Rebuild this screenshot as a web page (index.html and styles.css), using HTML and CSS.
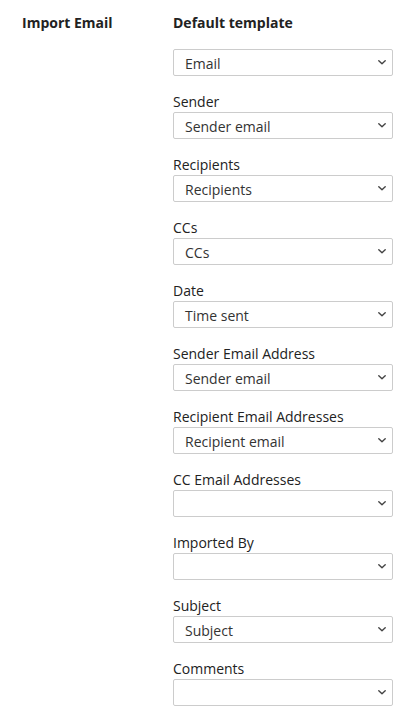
FILE: index.html
```html
<!DOCTYPE html>
<html>
<head>
<meta charset="utf-8">
<link rel="stylesheet" href="styles.css">
</head>
<body>
<div class="page">
  <div class="section-title">Import Email</div>
  <div class="form">
    <div class="form-title">Default template</div>
    <div class="field">
      <div class="select"><span class="value">Email</span><svg class="chev" viewBox="0 0 8 5"><path d="M0.8 0.8 L4 3.8 L7.2 0.8"/></svg></div>
    </div>
    <div class="field">
      <div class="label">Sender</div>
      <div class="select"><span class="value">Sender email</span><svg class="chev" viewBox="0 0 8 5"><path d="M0.8 0.8 L4 3.8 L7.2 0.8"/></svg></div>
    </div>
    <div class="field">
      <div class="label">Recipients</div>
      <div class="select"><span class="value">Recipients</span><svg class="chev" viewBox="0 0 8 5"><path d="M0.8 0.8 L4 3.8 L7.2 0.8"/></svg></div>
    </div>
    <div class="field">
      <div class="label">CCs</div>
      <div class="select"><span class="value">CCs</span><svg class="chev" viewBox="0 0 8 5"><path d="M0.8 0.8 L4 3.8 L7.2 0.8"/></svg></div>
    </div>
    <div class="field">
      <div class="label">Date</div>
      <div class="select"><span class="value">Time sent</span><svg class="chev" viewBox="0 0 8 5"><path d="M0.8 0.8 L4 3.8 L7.2 0.8"/></svg></div>
    </div>
    <div class="field">
      <div class="label">Sender Email Address</div>
      <div class="select"><span class="value">Sender email</span><svg class="chev" viewBox="0 0 8 5"><path d="M0.8 0.8 L4 3.8 L7.2 0.8"/></svg></div>
    </div>
    <div class="field">
      <div class="label">Recipient Email Addresses</div>
      <div class="select"><span class="value">Recipient email</span><svg class="chev" viewBox="0 0 8 5"><path d="M0.8 0.8 L4 3.8 L7.2 0.8"/></svg></div>
    </div>
    <div class="field">
      <div class="label">CC Email Addresses</div>
      <div class="select"><span class="value"></span><svg class="chev" viewBox="0 0 8 5"><path d="M0.8 0.8 L4 3.8 L7.2 0.8"/></svg></div>
    </div>
    <div class="field">
      <div class="label">Imported By</div>
      <div class="select"><span class="value"></span><svg class="chev" viewBox="0 0 8 5"><path d="M0.8 0.8 L4 3.8 L7.2 0.8"/></svg></div>
    </div>
    <div class="field">
      <div class="label">Subject</div>
      <div class="select"><span class="value">Subject</span><svg class="chev" viewBox="0 0 8 5"><path d="M0.8 0.8 L4 3.8 L7.2 0.8"/></svg></div>
    </div>
    <div class="field">
      <div class="label">Comments</div>
      <div class="select"><span class="value"></span><svg class="chev" viewBox="0 0 8 5"><path d="M0.8 0.8 L4 3.8 L7.2 0.8"/></svg></div>
    </div>
  </div>
</div>
</body>
</html>
```

FILE: styles.css
```css
html, body {
  margin: 0;
  padding: 0;
  background: #ffffff;
}
body {
  font-family: "Open Sans", "Liberation Sans", sans-serif;
  font-size: 14px;
  line-height: 20px;
  color: #222222;
}
.page {
  display: grid;
  grid-template-columns: 151px 220px;
  padding: 13px 0 0 22px;
}
.section-title,
.form-title {
  font-weight: 700;
  color: #222222;
}
.form {
  display: flex;
  flex-direction: column;
  gap: 16px;
}
.label {
  color: #222222;
}
.select {
  box-sizing: border-box;
  height: 27px;
  width: 220px;
  border: 1px solid #cccccc;
  border-radius: 2px;
  display: flex;
  align-items: center;
  justify-content: space-between;
  padding: 0 6px 0 11px;
  color: #333333;
  background: #ffffff;
}
.value {
  padding-top: 2px;
}
.chev {
  width: 8px;
  height: 5px;
  fill: none;
  stroke: #444444;
  stroke-width: 1.4;
  stroke-linecap: round;
  stroke-linejoin: round;
}
```
